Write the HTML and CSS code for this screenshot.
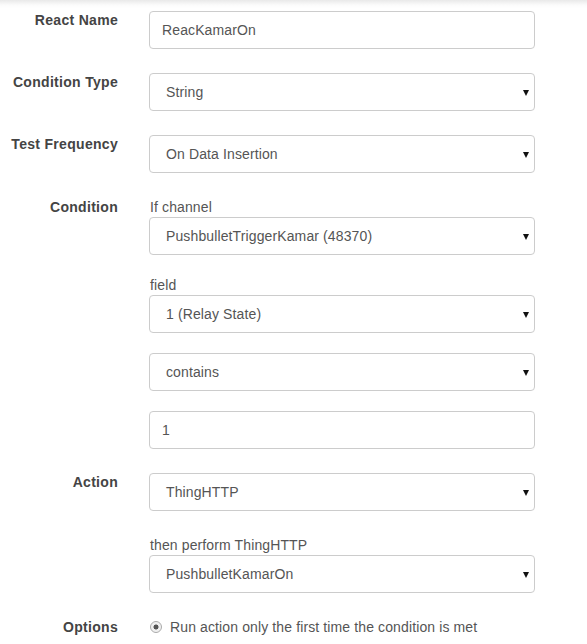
FILE: index.html
```html
<!DOCTYPE html>
<html>
<head>
<meta charset="utf-8">
<link rel="stylesheet" href="styles.css">
</head>
<body>
<form class="form">
  <div class="group">
    <div class="label">React Name</div>
    <div class="field"><div class="control">ReacKamarOn</div></div>
  </div>
  <div class="group">
    <div class="label">Condition Type</div>
    <div class="field"><div class="control select"><span>String</span><span class="caret"></span></div></div>
  </div>
  <div class="group">
    <div class="label">Test Frequency</div>
    <div class="field"><div class="control select"><span>On Data Insertion</span><span class="caret"></span></div></div>
  </div>
  <div class="group">
    <div class="label label-sub">Condition</div>
    <div class="field stack">
      <div class="item">
        <div class="sublabel">If channel</div>
        <div class="control select"><span>PushbulletTriggerKamar (48370)</span><span class="caret"></span></div>
      </div>
      <div class="item">
        <div class="sublabel">field</div>
        <div class="control select"><span>1 (Relay State)</span><span class="caret"></span></div>
      </div>
      <div class="item">
        <div class="control select"><span>contains</span><span class="caret"></span></div>
      </div>
      <div class="item">
        <div class="control">1</div>
      </div>
    </div>
  </div>
  <div class="group">
    <div class="label">Action</div>
    <div class="field stack2">
      <div class="control select"><span>ThingHTTP</span><span class="caret"></span></div>
      <div class="item">
        <div class="sublabel">then perform ThingHTTP</div>
        <div class="control select"><span>PushbulletKamarOn</span><span class="caret"></span></div>
      </div>
    </div>
  </div>
  <div class="group options">
    <div class="label">Options</div>
    <div class="field">
      <div class="radio-row"><span class="radio"></span><span>Run action only the first time the condition is met</span></div>
    </div>
  </div>
</form>
</body>
</html>
```
FILE: styles.css
```css
html, body {
  margin: 0;
  padding: 0;
}
body {
  font-family: "Liberation Sans", Arial, sans-serif;
  font-size: 14px;
  letter-spacing: 0.12px;
  color: #555;
  background: linear-gradient(to bottom, #e9e9e9 0, #fbfbfb 5px, #fff 8px) no-repeat;
  background-color: #fff;
  width: 587px;
  height: 644px;
  overflow: hidden;
}
.form {
  padding-top: 11px;
}
.group {
  display: grid;
  grid-template-columns: 118px 386px;
  column-gap: 31px;
  margin-bottom: 24px;
}
.label {
  text-align: right;
  font-weight: bold;
  color: #444;
  line-height: 18px;
  letter-spacing: 0.3px;
}
.label-sub {
  line-height: 20px;
}
.field {
  display: flex;
  flex-direction: column;
}
.stack {
  gap: 20px;
}
.stack2 {
  gap: 24px;
}
.sublabel {
  line-height: 20px;
  color: #555;
  padding-left: 1px;
}
.control {
  box-sizing: border-box;
  height: 38px;
  border: 1px solid #ccc;
  border-radius: 4px;
  padding: 0 12px;
  display: flex;
  align-items: center;
  color: #555;
  background: #fff;
}
.select {
  padding: 0 4px 0 16px;
  justify-content: space-between;
}
.caret {
  width: 0;
  height: 0;
  border-left: 3.5px solid transparent;
  border-right: 3.5px solid transparent;
  border-top: 6px solid #111;
  margin-right: 1px;
  margin-top: 1px;
}
.options {
  padding-top: 1px;
}
.radio-row {
  display: flex;
  align-items: center;
  gap: 8px;
  line-height: 18px;
}
.radio {
  box-sizing: border-box;
  width: 12px;
  height: 12px;
  border-radius: 50%;
  border: 1px solid #aaa;
  background: radial-gradient(circle, #555 0, #555 2.2px, #eee 2.8px, #f6f6f6 100%);
  margin-left: 1px;
}
```
